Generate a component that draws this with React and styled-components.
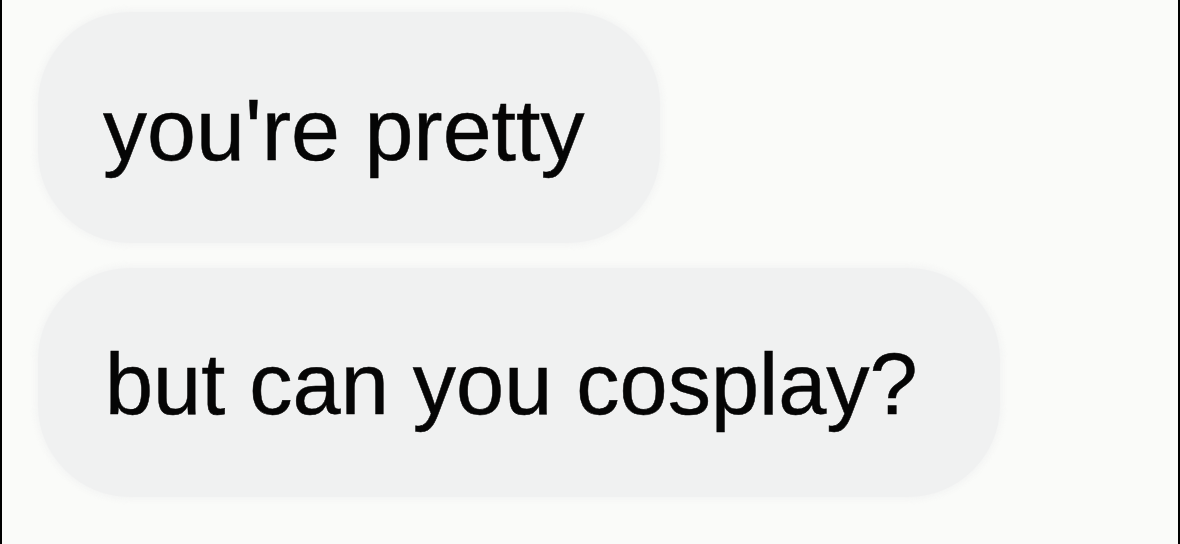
import React from "react";
import styled, { createGlobalStyle } from "styled-components";

const Global = createGlobalStyle`
  html, body { margin: 0; padding: 0; background: #fafbf9; }
  body { font-family: "Liberation Sans", Arial, sans-serif; }
`;

const Frame = styled.div`
  box-sizing: border-box;
  width: 1180px;
  height: 544px;
  background: #fafbf9;
  border-left: 2px solid #000;
  border-right: 2px solid #000;
  padding: 12px 0 0 36px;
  display: flex;
  flex-direction: column;
  align-items: flex-start;
  gap: 25px;
  overflow: hidden;
`;

const Bubble = styled.div`
  box-sizing: border-box;
  height: ${(p) => p.$h}px;
  display: inline-flex;
  align-items: center;
  padding: 4px ${(p) => p.$pr}px 0 ${(p) => p.$pl}px;
  background: #f0f1f1;
  border-radius: 92px;
  box-shadow: 0 0 6px 2px rgba(240, 241, 241, 0.8);
  font-size: ${(p) => p.$fs}px;
  line-height: 1;
  color: #050505;
  -webkit-text-stroke: 0.5px #050505;
  white-space: nowrap;
`;

export default function App() {
  return (
    <>
      <Global />
      <Frame>
        <Bubble $h={231} $pl={65} $pr={76} $fs={88}>you're pretty</Bubble>
        <Bubble $h={229} $pl={67} $pr={82} $fs={86.5}>but can you cosplay?</Bubble>
      </Frame>
    </>
  );
}
